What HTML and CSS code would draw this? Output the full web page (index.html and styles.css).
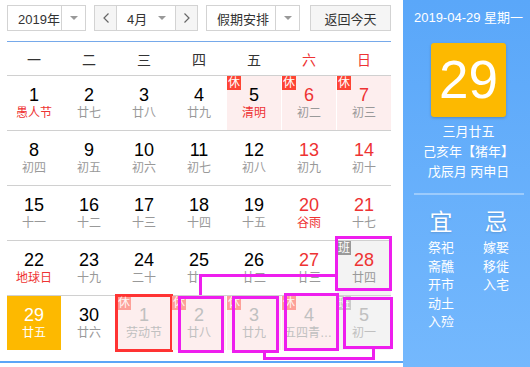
FILE: index.html
```html
<!DOCTYPE html>
<html lang="zh-CN">
<head>
    <meta charset="UTF-8">
    <meta name="viewport" content="width=device-width, initial-scale=1.0">
    <title>万年历</title>
    <link rel="stylesheet" href="styles.css">
</head>
<body>
    <div class="calendar">
        <div class="toolbar">
            <div class="select year">
                <span class="label">2019年</span>
                <span class="arrow"></span>
            </div>
            <div class="select month">
                <span class="step">
                    <svg width="6" height="10" viewBox="0 0 6 10"><polyline points="5.5,0.5 1,5 5.5,9.5" fill="none" stroke="#666" stroke-width="1.2"/></svg>
                </span>
                <span class="label">4月<i class="caret"></i></span>
                <span class="step">
                    <svg width="6" height="10" viewBox="0 0 6 10"><polyline points="0.5,0.5 5,5 0.5,9.5" fill="none" stroke="#666" stroke-width="1.2"/></svg>
                </span>
            </div>
            <div class="select holiday">
                <span class="label">假期安排</span>
                <span class="arrow"></span>
            </div>
            <div class="today-btn">返回今天</div>
        </div>

        <div class="rule"></div>

        <div class="week-head">
            <span>一</span><span>二</span><span>三</span><span>四</span><span>五</span>
            <span class="red">六</span><span class="red">日</span>
        </div>

        <div class="row">
            <div class="cell"><div class="num">1</div><div class="lunar fest">愚人节</div></div>
            <div class="cell"><div class="num">2</div><div class="lunar">廿七</div></div>
            <div class="cell"><div class="num">3</div><div class="lunar">廿八</div></div>
            <div class="cell"><div class="num">4</div><div class="lunar">廿九</div></div>
            <div class="cell rest"><span class="badge">休</span><div class="num">5</div><div class="lunar fest">清明</div></div>
            <div class="cell rest"><span class="badge">休</span><div class="num red">6</div><div class="lunar">初二</div></div>
            <div class="cell rest"><span class="badge">休</span><div class="num red">7</div><div class="lunar">初三</div></div>
        </div>
        <div class="row">
            <div class="cell"><div class="num">8</div><div class="lunar">初四</div></div>
            <div class="cell"><div class="num">9</div><div class="lunar">初五</div></div>
            <div class="cell"><div class="num">10</div><div class="lunar">初六</div></div>
            <div class="cell"><div class="num">11</div><div class="lunar">初七</div></div>
            <div class="cell"><div class="num">12</div><div class="lunar">初八</div></div>
            <div class="cell"><div class="num red">13</div><div class="lunar">初九</div></div>
            <div class="cell"><div class="num red">14</div><div class="lunar">初十</div></div>
        </div>
        <div class="row">
            <div class="cell"><div class="num">15</div><div class="lunar">十一</div></div>
            <div class="cell"><div class="num">16</div><div class="lunar">十二</div></div>
            <div class="cell"><div class="num">17</div><div class="lunar">十三</div></div>
            <div class="cell"><div class="num">18</div><div class="lunar">十四</div></div>
            <div class="cell"><div class="num">19</div><div class="lunar">十五</div></div>
            <div class="cell"><div class="num red">20</div><div class="lunar fest">谷雨</div></div>
            <div class="cell"><div class="num red">21</div><div class="lunar">十七</div></div>
        </div>
        <div class="row">
            <div class="cell"><div class="num">22</div><div class="lunar fest">地球日</div></div>
            <div class="cell"><div class="num">23</div><div class="lunar">十九</div></div>
            <div class="cell"><div class="num">24</div><div class="lunar">二十</div></div>
            <div class="cell"><div class="num">25</div><div class="lunar">廿一</div></div>
            <div class="cell"><div class="num">26</div><div class="lunar">廿二</div></div>
            <div class="cell"><div class="num red">27</div><div class="lunar">廿三</div></div>
            <div class="cell work"><span class="badge">班</span><div class="num red">28</div><div class="lunar">廿四</div></div>
        </div>
        <div class="row">
            <div class="cell today"><div class="num">29</div><div class="lunar">廿五</div></div>
            <div class="cell"><div class="num">30</div><div class="lunar">廿六</div></div>
            <div class="cell rest other selected"><span class="badge">休</span><div class="num">1</div><div class="lunar">劳动节</div></div>
            <div class="cell rest other"><span class="badge">休</span><div class="num">2</div><div class="lunar">廿八</div></div>
            <div class="cell rest other"><span class="badge">休</span><div class="num">3</div><div class="lunar">廿九</div></div>
            <div class="cell rest other"><span class="badge">休</span><div class="num">4</div><div class="lunar">五四青年节</div></div>
            <div class="cell work other"><span class="badge">班</span><div class="num">5</div><div class="lunar">初一</div></div>
        </div>
    </div>

    <div class="panel">
        <div class="panel-date">2019-04-29 星期一</div>
        <div class="big-day">29</div>
        <div class="panel-lunar">
            <div>三月廿五</div>
            <div>己亥年【猪年】</div>
            <div>戊辰月 丙申日</div>
        </div>
        <div class="panel-rule"></div>
        <div class="yiji">
            <div class="col">
                <div class="head">宜</div>
                <div>祭祀</div>
                <div>斋醮</div>
                <div>开市</div>
                <div>动土</div>
                <div>入殓</div>
            </div>
            <div class="col">
                <div class="head">忌</div>
                <div>嫁娶</div>
                <div>移徙</div>
                <div>入宅</div>
            </div>
        </div>
    </div>

    <!-- highlight outlines over the grid -->
    <div class="mark" style="left:335px; top:236px; width:57px; height:55px;"></div>
    <div class="mark" style="left:178px; top:296px; width:46px; height:57px;"></div>
    <div class="mark" style="left:232px; top:296px; width:47px; height:57px;"></div>
    <div class="mark" style="left:284px; top:293px; width:55px; height:58px;"></div>
    <div class="mark" style="left:343px; top:297px; width:50px; height:52px;"></div>
    <div class="mark-line" style="left:199px; top:274px; width:138px; height:3px;"></div>
    <div class="mark-line" style="left:199px; top:274px; width:3px; height:21px;"></div>
    <div class="mark-line" style="left:263px; top:357px; width:112px; height:3px;"></div>
    <div class="mark-line" style="left:263px; top:351px; width:3px; height:9px;"></div>
    <div class="mark-line" style="left:372px; top:349px; width:3px; height:11px;"></div>
</body>
</html>
```

FILE: styles.css
```css
body {
    margin: 0;
    height: 367px;
    display: flex;
    position: relative;
    background: #fff;
    font-family: "Liberation Sans", "Noto Sans CJK SC", sans-serif;
    color: #333;
    overflow: hidden;
}
.calendar {
    width: 403px;
    height: 363px;
    box-sizing: border-box;
    padding: 5px 12px 0 7px;
    border-bottom: 2px solid #5ba6f7;
}
.toolbar {
    display: flex;
    height: 26px;
    font-size: 13px;
}
.select {
    display: flex;
    box-sizing: border-box;
    height: 26px;
    border: 1px solid #d3d3d3;
    margin-right: 8px;
}
.select .label {
    flex: 1;
    display: flex;
    align-items: center;
    padding-left: 10px;
}
.select .arrow {
    width: 23px;
    border-left: 1px solid #d3d3d3;
    display: flex;
    align-items: center;
    justify-content: center;
}
.select .arrow::after,
.caret {
    content: "";
    display: block;
    border-left: 4px solid transparent;
    border-right: 4px solid transparent;
    border-top: 4px solid #999;
}
.year { width: 79px; }
.month { width: 104px; }
.holiday { width: 94px; margin-right: 10px; }
.month .step {
    width: 21px;
    background: #f5f5f5;
    display: flex;
    align-items: center;
    justify-content: center;
}
.month .step:first-child { border-right: 1px solid #d3d3d3; }
.month .step:last-child { border-left: 1px solid #d3d3d3; }
.month .label { padding-left: 10px; }
.caret { margin-left: auto; margin-right: 9px; }
.today-btn {
    width: 81px;
    box-sizing: border-box;
    border: 1px solid #d3d3d3;
    background: #f5f5f5;
    display: flex;
    align-items: center;
    justify-content: center;
}
.rule {
    margin-top: 10px;
    height: 1px;
    background: #76a9ea;
}
.week-head {
    display: grid;
    grid-template-columns: repeat(7, 54px);
    column-gap: 1px;
    height: 33px;
    align-items: center;
    text-align: center;
    font-size: 14px;
    color: #333;
}
.row {
    display: grid;
    grid-template-columns: repeat(7, 54px);
    column-gap: 1px;
    border-top: 1px solid #d0d0d0;
}
.cell {
    position: relative;
    height: 54px;
    box-sizing: border-box;
    padding-top: 9px;
    text-align: center;
}
.num {
    font-size: 18px;
    line-height: 20px;
    color: #000;
}
.lunar {
    font-size: 12px;
    line-height: 16px;
    color: #999;
    padding: 0 2px;
    white-space: nowrap;
    overflow: hidden;
    text-overflow: ellipsis;
}
.red, .num.red { color: #e33; }
.lunar.fest { color: #e33; }
.badge {
    position: absolute;
    left: 0;
    top: 0;
    width: 14px;
    height: 14px;
    font-size: 12px;
    line-height: 14px;
    color: #fff;
    background: #fe4433;
}
.rest { background: #fdeeee; }
.work { background: #f3f3f3; }
.work .badge { background: #999; }
.today { background: #fdb900; }
.today .num, .today .lunar { color: #fff; }
.other .num, .other .lunar { color: #c0c0c0; }
.other .badge { opacity: 0.45; }
.selected {
    outline: 3px solid #f33;
    outline-offset: -1px;
}
.panel {
    width: 127px;
    height: 367px;
    box-sizing: border-box;
    padding-left: 4px;
    background: linear-gradient(#5aa7f9, #74b8fd);
    color: #fff;
    text-align: center;
}
.panel-date {
    padding-top: 10px;
    font-size: 13px;
    line-height: 16px;
}
.big-day {
    width: 75px;
    height: 74px;
    margin: 17px auto 0;
    background: #fdb900;
    border-radius: 3px;
    box-shadow: 0 1px 3px rgba(0, 0, 0, 0.2);
    font-size: 53px;
    line-height: 74px;
}
.panel-lunar {
    margin-top: 5px;
    font-size: 13px;
    line-height: 20px;
}
.panel-rule {
    width: 110px;
    height: 2px;
    margin: 11px auto 0;
    background: rgba(255, 255, 255, 0.35);
}
.yiji {
    display: flex;
    justify-content: center;
    margin-top: 13px;
    font-size: 13px;
    line-height: 18.5px;
}
.yiji .col { width: 55px; }
.yiji .head {
    font-size: 23px;
    line-height: 28px;
    margin-bottom: 3px;
    text-shadow: 0 1px 2px rgba(0, 0, 0, 0.15);
}
.mark {
    position: absolute;
    box-sizing: border-box;
    border: 3px solid #ee1eee;
}
.mark-line {
    position: absolute;
    background: #ee1eee;
}
```
